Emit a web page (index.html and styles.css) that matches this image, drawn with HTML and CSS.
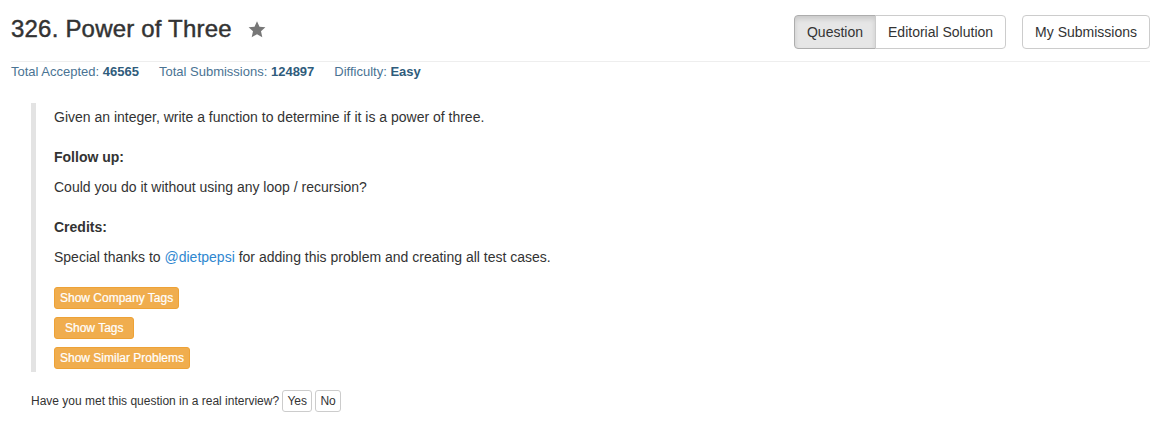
FILE: index.html
```html
<!DOCTYPE html>
<html>
<head>
<meta charset="utf-8">
<link rel="stylesheet" href="styles.css">
</head>
<body>
<div class="page">
  <div class="header">
    <div class="title-wrap">
      <h3 class="title">326. Power of Three</h3>
      <svg class="star" width="18" height="17" viewBox="0 0 18 17"><polygon points="9,0.3 11.5,5.7 17.4,6.3 13,10.3 14.3,16.2 9,13.2 3.7,16.2 5,10.3 0.6,6.3 6.5,5.7" fill="#777"/></svg>
    </div>
    <div class="actions">
      <div class="btn-group">
        <span class="btn active">Question</span><span class="btn">Editorial Solution</span>
      </div>
      <span class="btn single">My Submissions</span>
    </div>
  </div>
  <div class="stats">
    <span class="stat">Total Accepted: <b>46565</b></span>
    <span class="stat">Total Submissions: <b>124897</b></span>
    <span class="stat">Difficulty: <b>Easy</b></span>
  </div>
  <div class="quote">
    <p>Given an integer, write a function to determine if it is a power of three.</p>
    <p class="sub"><b>Follow up:</b></p>
    <p>Could you do it without using any loop / recursion?</p>
    <p class="sub"><b>Credits:</b></p>
    <p>Special thanks to <a class="link">@dietpepsi</a> for adding this problem and creating all test cases.</p>
    <div class="tags">
      <span class="obtn">Show Company Tags</span>
      <span class="obtn wide">Show Tags</span>
      <span class="obtn">Show Similar Problems</span>
    </div>
  </div>
  <div class="interview">
    Have you met this question in a real interview? <span class="xbtn">Yes</span> <span class="xbtn">No</span>
  </div>
</div>
</body>
</html>
```

FILE: styles.css
```css
html, body {
  margin: 0;
  background: #fff;
}
body {
  font-family: "Helvetica Neue", Helvetica, "Liberation Sans", Arial, sans-serif;
  color: #333;
  font-size: 14px;
  line-height: 20px;
}
.page {
  padding: 0 19px 0 11px;
}
.header {
  display: flex;
  justify-content: space-between;
  align-items: flex-start;
  padding-top: 15px;
  padding-bottom: 12px;
  border-bottom: 1px solid #eee;
}
.title-wrap {
  display: flex;
  align-items: center;
  gap: 16px;
}
.title {
  margin: 0;
  font-size: 24px;
  line-height: 28px;
  font-weight: 500;
  letter-spacing: 0.2px;
  color: #333;
  -webkit-text-stroke: 0.45px #333;
}
.star {
  display: block;
}
.actions {
  display: flex;
  gap: 16px;
}
.btn-group {
  display: flex;
}
.btn {
  display: inline-block;
  padding: 6px 12px;
  font-size: 14px;
  line-height: 20px;
  border: 1px solid #ccc;
  background: #fff;
  color: #333;
  border-radius: 4px;
}
.btn-group .btn:first-child {
  border-top-right-radius: 0;
  border-bottom-right-radius: 0;
}
.btn-group .btn:last-child {
  border-top-left-radius: 0;
  border-bottom-left-radius: 0;
  margin-left: -1px;
}
.btn.active {
  background: #e6e6e6;
  border-color: #adadad;
  box-shadow: inset 0 3px 5px rgba(0, 0, 0, 0.125);
}
.stats {
  display: flex;
  gap: 20px;
  padding-top: 1px;
  font-size: 13px;
  line-height: 17px;
  color: #4a7393;
}
.stats b {
  color: #2f5c7c;
}
.quote {
  margin: 23px 0 18px 20px;
  padding: 4px 20px 3px 18px;
  border-left: 5px solid #e3e3e3;
}
.quote p {
  margin: 0 0 10px;
}
.quote p.sub {
  margin-top: 20px;
}
.link {
  color: #2f87d0;
  text-decoration: none;
}
.tags {
  display: flex;
  flex-direction: column;
  align-items: flex-start;
  gap: 8px;
  padding-top: 10px;
}
.obtn {
  display: inline-block;
  padding: 1px 5px;
  font-size: 12px;
  line-height: 18px;
  color: #fff;
  background: #f0ad4e;
  border: 1px solid #eea236;
  border-radius: 3px;
  -webkit-text-stroke: 0.2px #fff;
}
.obtn.wide {
  padding: 1px 10px;
}
.interview {
  margin-left: 20px;
  font-size: 12px;
  line-height: 22px;
  color: #333;
}
.xbtn {
  display: inline-block;
  padding: 1px 4px;
  font-size: 12px;
  line-height: 18px;
  border: 1px solid #ccc;
  border-radius: 3px;
  background: #fff;
  color: #333;
}
```
